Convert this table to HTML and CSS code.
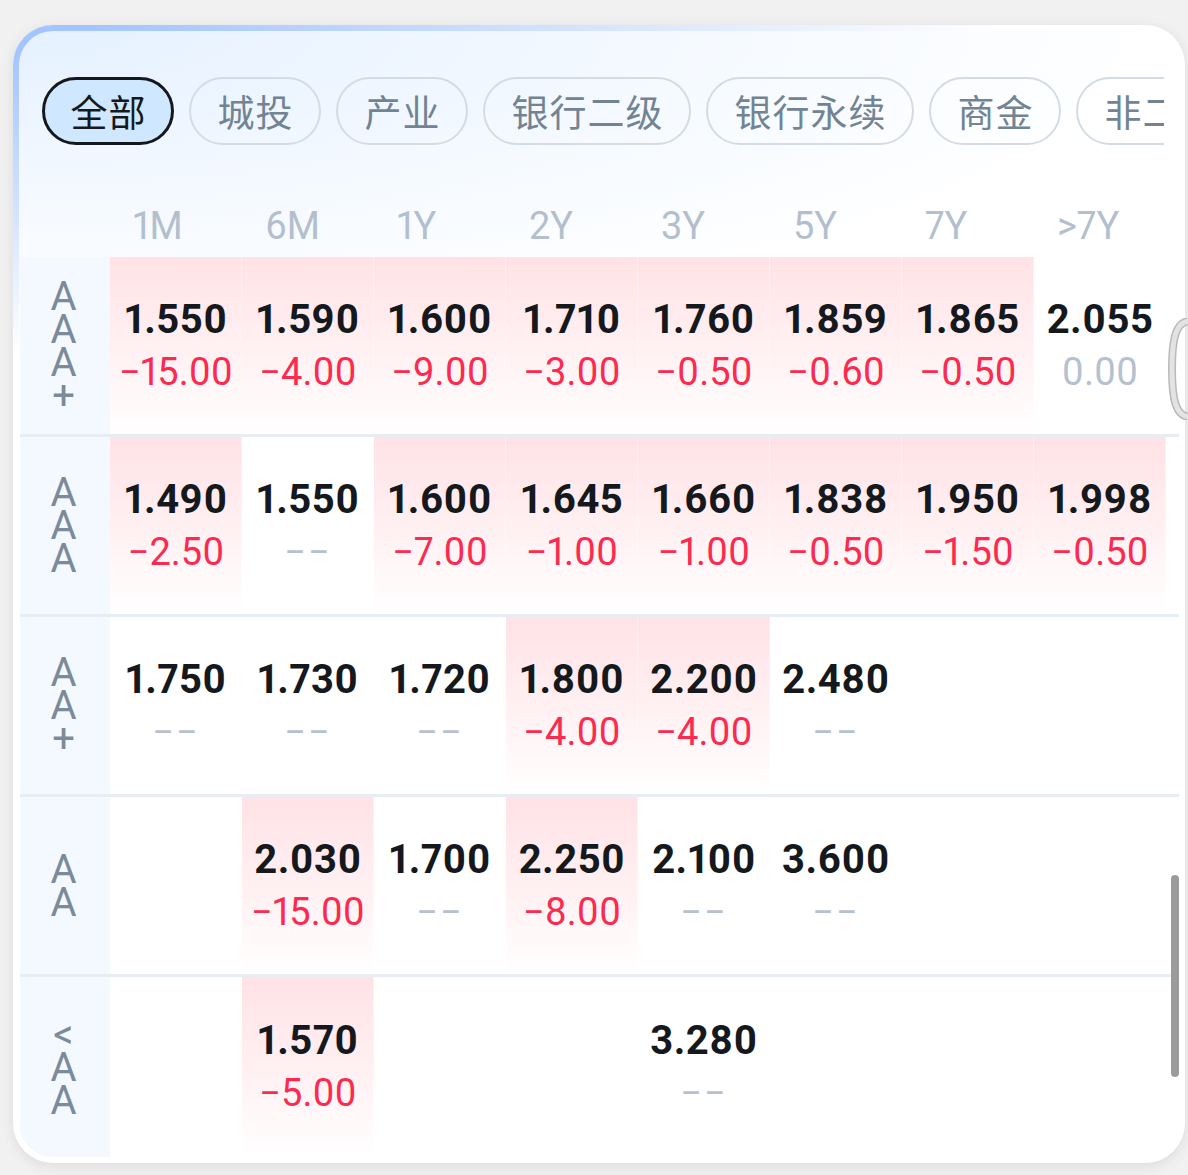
FILE: index.html
```html
<!DOCTYPE html>
<html lang="zh-CN">
<head>
<meta charset="utf-8">
<title>收益率矩阵</title>
<link rel="stylesheet" href="styles.css">
</head>
<body>
<div class="page">
  <div class="card">
    <div class="inner">
      <div class="tabs">
        <div class="tab active">全部</div>
        <div class="tab">城投</div>
        <div class="tab">产业</div>
        <div class="tab">银行二级</div>
        <div class="tab">银行永续</div>
        <div class="tab">商金</div>
        <div class="tab">非二永续</div>
      </div>

      <div class="head">
        <div class="corner"></div>
        <div class="hcell">1M</div>
        <div class="hcell">6M</div>
        <div class="hcell">1Y</div>
        <div class="hcell">2Y</div>
        <div class="hcell">3Y</div>
        <div class="hcell">5Y</div>
        <div class="hcell">7Y</div>
        <div class="hcell">&gt;7Y</div>
      </div>

      <div class="rows">
        <div class="row">
          <div class="label"><span class="vt">AAA+</span></div>
          <div class="cell up"><span class="val">1.550</span><span class="chg">−15.00</span></div>
          <div class="cell up"><span class="val">1.590</span><span class="chg">−4.00</span></div>
          <div class="cell up"><span class="val">1.600</span><span class="chg">−9.00</span></div>
          <div class="cell up"><span class="val">1.710</span><span class="chg">−3.00</span></div>
          <div class="cell up"><span class="val">1.760</span><span class="chg">−0.50</span></div>
          <div class="cell up"><span class="val">1.859</span><span class="chg">−0.60</span></div>
          <div class="cell up"><span class="val">1.865</span><span class="chg">−0.50</span></div>
          <div class="cell"><span class="val">2.055</span><span class="chg flat">0.00</span></div>
        </div>

        <div class="row">
          <div class="label"><span class="vt">AAA</span></div>
          <div class="cell up"><span class="val">1.490</span><span class="chg">−2.50</span></div>
          <div class="cell"><span class="val">1.550</span><span class="chg none">−−</span></div>
          <div class="cell up"><span class="val">1.600</span><span class="chg">−7.00</span></div>
          <div class="cell up"><span class="val">1.645</span><span class="chg">−1.00</span></div>
          <div class="cell up"><span class="val">1.660</span><span class="chg">−1.00</span></div>
          <div class="cell up"><span class="val">1.838</span><span class="chg">−0.50</span></div>
          <div class="cell up"><span class="val">1.950</span><span class="chg">−1.50</span></div>
          <div class="cell up"><span class="val">1.998</span><span class="chg">−0.50</span></div>
        </div>

        <div class="row">
          <div class="label"><span class="vt">AA+</span></div>
          <div class="cell"><span class="val">1.750</span><span class="chg none">−−</span></div>
          <div class="cell"><span class="val">1.730</span><span class="chg none">−−</span></div>
          <div class="cell"><span class="val">1.720</span><span class="chg none">−−</span></div>
          <div class="cell up"><span class="val">1.800</span><span class="chg">−4.00</span></div>
          <div class="cell up"><span class="val">2.200</span><span class="chg">−4.00</span></div>
          <div class="cell"><span class="val">2.480</span><span class="chg none">−−</span></div>
          <div class="cell"></div>
          <div class="cell"></div>
        </div>

        <div class="row">
          <div class="label"><span class="vt">AA</span></div>
          <div class="cell"></div>
          <div class="cell up"><span class="val">2.030</span><span class="chg">−15.00</span></div>
          <div class="cell"><span class="val">1.700</span><span class="chg none">−−</span></div>
          <div class="cell up"><span class="val">2.250</span><span class="chg">−8.00</span></div>
          <div class="cell"><span class="val">2.100</span><span class="chg none">−−</span></div>
          <div class="cell"><span class="val">3.600</span><span class="chg none">−−</span></div>
          <div class="cell"></div>
          <div class="cell"></div>
        </div>

        <div class="row last">
          <div class="label"><span class="vt">&lt;AA</span></div>
          <div class="cell"></div>
          <div class="cell up"><span class="val">1.570</span><span class="chg">−5.00</span></div>
          <div class="cell"></div>
          <div class="cell"></div>
          <div class="cell"><span class="val">3.280</span><span class="chg none">−−</span></div>
          <div class="cell"></div>
          <div class="cell"></div>
          <div class="cell"></div>
        </div>
      </div>

      <div class="thumb"></div>
    </div>
  </div>

  <svg class="handle" width="22" height="102" viewBox="0 0 22 102">
    <path d="M21 3 C8 4 4 20 4 51 C4 82 8 98 21 99" fill="none" stroke="#b9b9b9" stroke-width="8" stroke-linecap="round"/>
    <path d="M21 3 C8 4 4 20 4 51 C4 82 8 98 21 99" fill="none" stroke="#e3e3e3" stroke-width="5" stroke-linecap="round"/>
  </svg>
</div>
</body>
</html>
```

FILE: styles.css
```css
* { box-sizing: border-box; }

html, body {
  margin: 0;
  padding: 0;
  background: #f1f1f1;
}

body {
  font-family: Roboto, "Noto Sans", "Noto Sans CJK SC", sans-serif;
  font-variant-numeric: proportional-nums;
}

.page {
  position: relative;
  width: 1188px;
  height: 1175px;
  padding: 25px 3px 12px 13px;
  overflow: hidden;
}

.card {
  width: 1172px;
  height: 1138px;
  border-radius: 40px;
  padding: 6px 6px 6px 6px;
  background: radial-gradient(ellipse 1000px 330px at 0 0, #a3c5ff 8%, #ffffff 100%);
  box-shadow: 0 3px 14px rgba(0, 0, 0, 0.09);
}

.inner {
  position: relative;
  height: 100%;
  border-radius: 34px;
  overflow: hidden;
  background: radial-gradient(ellipse 1150px 300px at 0 0, #e5f1ff 0%, #f4f9ff 55%, #ffffff 100%);
}

/* tabs */
.tabs {
  display: flex;
  gap: 15px;
  width: 1122px;
  margin: 46px 0 0 23px;
  overflow: hidden;
}

.tab {
  flex-shrink: 0;
  height: 68px;
  padding: 0 25.5px 0 26.5px;
  border: 2px solid #d4dbe3;
  border-radius: 34px;
  font-family: "Noto Sans CJK SC", sans-serif;
  font-size: 37px;
  letter-spacing: 1px;
  line-height: 64px;
  color: #728494;
  white-space: nowrap;
}

.tab.active {
  border: 3px solid #14181c;
  background: #cfe7ff;
  color: #15191d;
  line-height: 62px;
  padding: 0 24.5px 0 25.5px;
}

/* header */
.head {
  display: flex;
  height: 62px;
  margin: 50px 0 0 1px;
  align-items: center;
}

.corner {
  width: 90px;
  flex-shrink: 0;
}

.hcell {
  width: 132px;
  flex-shrink: 0;
  padding-left: 23px;
  font-size: 38px;
  color: #b4bfcd;
}

/* rows */
.rows {
  margin-left: 1px;
}

.row {
  display: grid;
  grid-template-columns: 90px repeat(8, 132px);
  height: 180px;
  border-bottom: 3px solid #e7edf3;
}

.row.last {
  border-bottom: 0;
}

.label {
  background: #f4f9ff;
  display: flex;
  align-items: center;
  justify-content: center;
}

.vt {
  display: block;
  width: 28px;
  margin-right: 3px;
  word-break: break-all;
  text-align: center;
  font-size: 40px;
  line-height: 33px;
  color: #7b8b99;
}

.cell {
  display: flex;
  flex-direction: column;
  align-items: center;
  justify-content: center;
  line-height: 52px;
}

.cell.up {
  background: linear-gradient(180deg, #ffe2e6 0%, #fff0f2 50%, #ffffff 100%);
  box-shadow: inset -1px 0 0 rgba(255, 255, 255, 0.35);
}

.val {
  font-size: 40px;
  font-weight: 700;
  letter-spacing: 0.5px;
  color: #15181c;
}

.chg {
  font-size: 38px;
  color: #fb2a4e;
}

.chg.flat {
  color: #b6c1cf;
}

.chg.none {
  color: #b6c1cf;
  letter-spacing: 2px;
}

/* overlays */
.thumb {
  position: absolute;
  right: 0;
  top: 844px;
  width: 8px;
  height: 202px;
  border-radius: 4px;
  background: #9b9b9b;
}

.handle {
  position: absolute;
  left: 1168px;
  top: 318px;
}
```
